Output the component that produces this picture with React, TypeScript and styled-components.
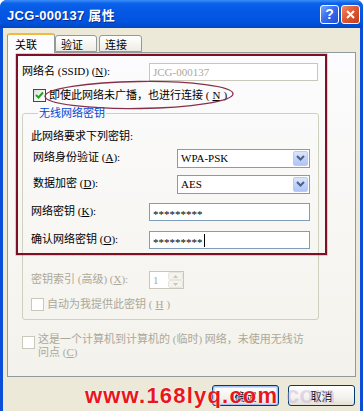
import React from 'react';
import styled, { createGlobalStyle } from 'styled-components';

const GlobalStyle = createGlobalStyle`
  html, body {
    margin: 0;
    padding: 0;
    background: #ffffff;
  }
  body {
    font-family: "Liberation Serif", "Noto Sans CJK SC", serif;
    font-size: 11px;
    color: #000;
  }
`;

const Window = styled.div`
  position: relative;
  width: 363px;
  height: 411px;
  overflow: hidden;
  background: #0b4fd9;
  border-radius: 7px 7px 0 0;
  display: flex;
  flex-direction: column;
`;

const TitleBar = styled.div`
  height: 28px;
  flex: none;
  display: flex;
  align-items: center;
  gap: 2px;
  padding: 0 3px 0 7px;
  background: linear-gradient(
    to bottom,
    #3d8ef8 0%,
    #0a62ea 12%,
    #0457e3 45%,
    #0053dd 80%,
    #0046c4 100%
  );
`;

const Title = styled.div`
  flex: 1;
  color: #fff;
  font: bold 13px "Liberation Sans", "Noto Sans CJK SC", sans-serif;
  text-shadow: 1px 1px 0 #0a2a8c;
  letter-spacing: 0.3px;
`;

const CaptionButton = styled.div<{ $kind: 'help' | 'close' }>`
  width: 19px;
  height: 19px;
  box-sizing: border-box;
  border: 1px solid #fff;
  border-radius: 3px;
  display: flex;
  align-items: center;
  justify-content: center;
  color: #fff;
  font: bold 14px "Liberation Sans", sans-serif;
  background: ${p =>
    p.$kind === 'close'
      ? 'linear-gradient(135deg, #f08a6a 0%, #df5a35 45%, #c33c16 100%)'
      : 'linear-gradient(135deg, #7aa7ff 0%, #3a6cf0 45%, #1f4fd6 100%)'};
`;

const Body = styled.div`
  flex: 1;
  margin: 0 3px;
  padding: 5px 4px 0 4px;
  background: #ece9d8;
  display: flex;
  flex-direction: column;
`;

const TabStrip = styled.div`
  display: flex;
  align-items: flex-end;
  height: 20px;
  margin-bottom: -1px;
  position: relative;
  z-index: 1;
`;

const Tab = styled.div<{ $active?: boolean; $w: number; $gap?: number }>`
  width: ${p => p.$w}px;
  margin-left: ${p => p.$gap ?? 0}px;
  height: ${p => (p.$active ? 20 : 17)}px;
  margin-bottom: ${p => (p.$active ? 0 : 1)}px;
  box-sizing: border-box;
  border: 1px solid #919b9c;
  border-bottom: ${p => (p.$active ? 'none' : '1px solid #919b9c')};
  border-top: ${p => (p.$active ? '2px solid #f2b93c' : '1px solid #919b9c')};
  border-radius: 3px 3px 0 0;
  background: ${p =>
    p.$active
      ? '#fcfcfe'
      : 'linear-gradient(to bottom, #ffffff 0%, #f7f6f1 50%, #ecebe5 100%)'};
  display: flex;
  align-items: center;
  padding-left: ${p => (p.$active ? 7 : 5)}px;
  font-family: "Noto Sans CJK SC", sans-serif;
  font-size: 11px;
  line-height: 14px;
`;

const Panel = styled.div`
  height: 325px;
  box-sizing: border-box;
  border: 1px solid #919b9c;
  background: linear-gradient(to bottom, #fcfcfe 0%, #f7f6f2 60%, #f3f2ec 100%);
  padding: 10px 0 0 14px;
  display: flex;
  flex-direction: column;
`;

const FieldRow = styled.div<{ $mt?: number }>`
  display: flex;
  align-items: center;
  height: 18px;
  margin-top: ${p => p.$mt ?? 0}px;
`;

const Label = styled.div<{ $w: number; $indent?: number; $disabled?: boolean }>`
  width: ${p => p.$w}px;
  padding-left: ${p => p.$indent ?? 0}px;
  box-sizing: border-box;
  white-space: nowrap;
  font-size: 11px;
  line-height: 14px;
  color: ${p => (p.$disabled ? '#aca899' : '#000')};
  margin-top: -2px;
`;

const TextBox = styled.div<{ $w: number; $disabled?: boolean }>`
  width: ${p => p.$w}px;
  height: 18px;
  box-sizing: border-box;
  border: 1px solid ${p => (p.$disabled ? '#c9c7ba' : '#7f9db9')};
  background: #fff;
  padding-left: 3px;
  display: flex;
  align-items: center;
  font-size: 11px;
  color: ${p => (p.$disabled ? '#aca899' : '#000')};
`;

const Stars = styled.span`
  font-family: "Liberation Serif", serif;
  font-size: 11px;
  padding-top: 3px;
`;

const Caret = styled.span`
  display: inline-block;
  width: 1px;
  height: 13px;
  background: #000;
  margin-left: 1px;
`;

const Select = styled.div<{ $w: number }>`
  width: ${p => p.$w}px;
  height: 19px;
  box-sizing: border-box;
  border: 1px solid #7f9db9;
  background: #fff;
  display: flex;
  align-items: center;
  padding: 0 1px 0 3px;
  font-size: 11px;
`;

const SelectValue = styled.span`
  flex: 1;
`;

const DropButton = styled.div`
  width: 15px;
  height: 15px;
  box-sizing: border-box;
  border: 1px solid #b9cbf3;
  border-radius: 2px;
  background: linear-gradient(to bottom, #dce6fd 0%, #c1d3fb 50%, #b0c5f6 100%);
  display: flex;
  align-items: center;
  justify-content: center;
`;

const CheckRow = styled.div<{ $mt?: number; $indent?: number; $disabled?: boolean }>`
  display: flex;
  align-items: center;
  gap: 3px;
  height: 14px;
  margin-top: ${p => p.$mt ?? 0}px;
  margin-left: ${p => p.$indent ?? 0}px;
  color: ${p => (p.$disabled ? '#aca899' : '#000')};
  font-size: 11px;
  line-height: 14px;
  white-space: nowrap;
`;

const CheckBox = styled.div<{ $disabled?: boolean }>`
  width: 13px;
  height: 13px;
  flex: none;
  box-sizing: border-box;
  border: 1px solid ${p => (p.$disabled ? '#cac8bb' : '#1c5180')};
  background: ${p =>
    p.$disabled ? '#fff' : 'linear-gradient(135deg, #dcdcd7 0%, #fbfbf9 70%, #ffffff 100%)'};
  display: flex;
  align-items: center;
  justify-content: center;
`;

const Group = styled.fieldset`
  margin: 4px 0 0 0;
  width: 297px;
  box-sizing: border-box;
  padding: 0 0 8px 8px;
  border: 1px solid #d0d0bf;
  border-radius: 3px;
  min-width: 0;
`;

const Legend = styled.legend`
  margin-left: 7px;
  padding: 0 1px;
  color: #0046d5;
  font-size: 11px;
  line-height: 14px;
`;

const Note = styled.div`
  margin-top: 9px;
  height: 14px;
  font-size: 11px;
  line-height: 14px;
`;

const Spinner = styled.div`
  width: 35px;
  height: 18px;
  box-sizing: border-box;
  border: 1px solid #c9c7ba;
  background: #fff;
  display: flex;
  align-items: center;
  padding-left: 3px;
  color: #aca899;
`;

const SpinValue = styled.span`
  flex: 1;
`;

const SpinButtons = styled.div`
  width: 15px;
  height: 16px;
  display: flex;
  flex-direction: column;
`;

const SpinHalf = styled.div`
  flex: 1;
  box-sizing: border-box;
  border: 1px solid #e8e6dc;
  border-radius: 2px;
  background: #f4f3ee;
  display: flex;
  align-items: center;
  justify-content: center;
`;

const AdHocRow = styled.div`
  display: flex;
  align-items: flex-start;
  gap: 3px;
  margin-top: 16px;
  color: #aca899;
`;

const AdHocText = styled.div`
  margin-top: -3px;
  font-size: 11px;
  line-height: 13px;
  white-space: nowrap;
`;

const ButtonRow = styled.div`
  display: flex;
  justify-content: flex-end;
  gap: 9px;
  margin-top: 8px;
  padding-right: 1px;
`;

const Button = styled.div<{ $default?: boolean }>`
  width: 67px;
  height: 21px;
  box-sizing: border-box;
  border: 1px solid #003c74;
  border-radius: 3px;
  background: linear-gradient(to bottom, #ffffff 0%, #f3f2ed 60%, #e3e0d6 100%);
  box-shadow: ${p => (p.$default ? 'inset 0 0 0 1px #a6c2f4, inset 0 0 0 2px #cfdcf8' : 'none')};
  display: flex;
  align-items: center;
  justify-content: center;
  font-family: "Noto Sans CJK SC", sans-serif;
  font-size: 11px;
`;

const Highlight = styled.div`
  position: absolute;
  left: 16px;
  top: 54px;
  width: 311px;
  height: 201px;
  box-sizing: border-box;
  border: 2px solid #7d1024;
  box-shadow: 0 0 0 0.5px rgba(125, 16, 36, 0.4);
  pointer-events: none;
`;

const Circle = styled.svg`
  position: absolute;
  left: 42px;
  top: 79px;
  pointer-events: none;
`;

const Watermark = styled.div`
  position: absolute;
  left: 85px;
  top: 383px;
  font: bold 22px "Liberation Sans", sans-serif;
  line-height: 26px;
  letter-spacing: 1.2px;
  color: #e8161d;
  text-shadow: 0 0 2px #fff, 0 0 1px #fff;
  white-space: nowrap;
`;

const GhostMark = styled.div`
  position: absolute;
  left: 286px;
  top: 381px;
  font: bold 24px "Liberation Sans", sans-serif;
  line-height: 28px;
  color: rgba(200, 170, 220, 0.45);
  white-space: nowrap;
  pointer-events: none;
`;

const Chevron = () => (
  <svg width="9" height="6" viewBox="0 0 9 6">
    <path d="M1 1 L4.5 4.5 L8 1" fill="none" stroke="#4d6185" strokeWidth="2" />
  </svg>
);

const Check = () => (
  <svg width="9" height="9" viewBox="0 0 9 9">
    <path d="M1 4 L3.5 6.5 L8 1.5" fill="none" stroke="#21a121" strokeWidth="2" />
  </svg>
);

const Arrow = ({ up }: { up?: boolean }) => (
  <svg width="5" height="3" viewBox="0 0 5 3">
    <path d={up ? 'M0 3 L2.5 0 L5 3 Z' : 'M0 0 L2.5 3 L5 0 Z'} fill="#c9c7ba" />
  </svg>
);

const App: React.FC = () => {
  return (
    <>
      <GlobalStyle />
      <Window>
        <TitleBar>
          <Title>JCG-000137 属性</Title>
          <CaptionButton $kind="help">?</CaptionButton>
          <CaptionButton $kind="close">
            <svg width="9" height="9" viewBox="0 0 9 9">
              <path d="M1 1 L8 8 M8 1 L1 8" stroke="#fff" strokeWidth="2" />
            </svg>
          </CaptionButton>
        </TitleBar>
        <Body>
          <TabStrip>
            <Tab $active $w={48}>关联</Tab>
            <Tab $w={42}>验证</Tab>
            <Tab $w={43} $gap={2}>连接</Tab>
          </TabStrip>
          <Panel>
            <FieldRow>
              <Label $w={127}>网络名 (SSID) (<u>N</u>):</Label>
              <TextBox $w={169} $disabled>JCG-000137</TextBox>
            </FieldRow>
            <CheckRow $mt={7} $indent={11}>
              <CheckBox>
                <Check />
              </CheckBox>
              即使此网络未广播，也进行连接 (<u>N</u>)
            </CheckRow>
            <Group>
              <Legend>无线网络密钥</Legend>
              <Note>此网络要求下列密钥:</Note>
              <FieldRow $mt={6}>
                <Label $w={146} $indent={2}>网络身份验证 (<u>A</u>):</Label>
                <Select $w={133}>
                  <SelectValue>WPA-PSK</SelectValue>
                  <DropButton>
                    <Chevron />
                  </DropButton>
                </Select>
              </FieldRow>
              <FieldRow $mt={8}>
                <Label $w={146} $indent={2}>数据加密 (<u>D</u>):</Label>
                <Select $w={133}>
                  <SelectValue>AES</SelectValue>
                  <DropButton>
                    <Chevron />
                  </DropButton>
                </Select>
              </FieldRow>
              <FieldRow $mt={10}>
                <Label $w={118}>网络密钥 (<u>K</u>):</Label>
                <TextBox $w={161}>
                  <Stars>*********</Stars>
                </TextBox>
              </FieldRow>
              <FieldRow $mt={10}>
                <Label $w={118}>确认网络密钥 (<u>O</u>):</Label>
                <TextBox $w={161}>
                  <Stars>*********</Stars>
                  <Caret />
                </TextBox>
              </FieldRow>
              <FieldRow $mt={22}>
                <Label $w={118} $disabled>密钥索引 (高级) (<u>X</u>):</Label>
                <Spinner>
                  <SpinValue>1</SpinValue>
                  <SpinButtons>
                    <SpinHalf>
                      <Arrow up />
                    </SpinHalf>
                    <SpinHalf>
                      <Arrow />
                    </SpinHalf>
                  </SpinButtons>
                </Spinner>
              </FieldRow>
              <CheckRow $mt={8} $disabled>
                <CheckBox $disabled />
                自动为我提供此密钥 (<u>H</u>)
              </CheckRow>
            </Group>
            <AdHocRow>
              <CheckBox $disabled />
              <AdHocText>
                这是一个计算机到计算机的 (临时) 网络，未使用无线访
                <br />
                问点 (<u>C</u>)
              </AdHocText>
            </AdHocRow>
          </Panel>
          <ButtonRow>
            <Button $default>确定</Button>
            <Button>取消</Button>
          </ButtonRow>
        </Body>
        <Highlight />
        <Circle width="196" height="32" viewBox="0 0 196 32">
          <ellipse
            cx="97"
            cy="16"
            rx="94"
            ry="13.5"
            fill="none"
            stroke="#86304a"
            strokeWidth="1.3"
            transform="rotate(-0.8 97 16)"
          />
        </Circle>
        <GhostMark>com</GhostMark>
        <Watermark>www.168lyq.com</Watermark>
      </Window>
    </>
  );
};

export default App;
